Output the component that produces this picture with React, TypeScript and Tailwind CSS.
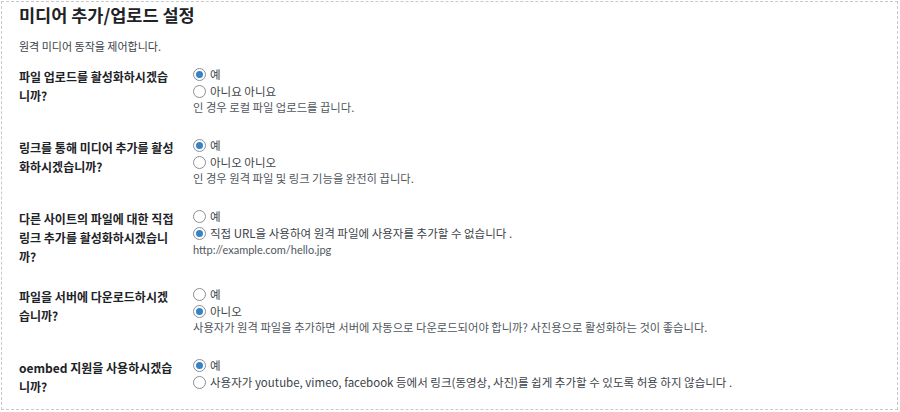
import React from "react";

function Radio({ checked }: { checked?: boolean }) {
  return (
    <span className="relative inline-flex h-[13px] w-[13px] shrink-0 items-center justify-center rounded-full border border-[#8c8f94] bg-white">
      {checked ? <span className="h-[7px] w-[7px] rounded-full bg-[#3582c4]" /> : null}
    </span>
  );
}

function Opt({ checked, children }: { checked?: boolean; children: React.ReactNode }) {
  return (
    <div className="flex h-[17px] items-center gap-[4px]">
      <Radio checked={checked} />
      <span>{children}</span>
    </div>
  );
}

function Row({ label, children }: { label: React.ReactNode; children: React.ReactNode }) {
  return (
    <div className="grid grid-cols-[174px_1fr] pb-[20px]">
      <div className="pr-[10px] pt-[1px] text-[12px] font-semibold leading-[19px] text-[#1d2327]">{label}</div>
      <div className="text-[11.5px] leading-[17px] text-[#3c434a]">{children}</div>
    </div>
  );
}

function Desc({ children }: { children: React.ReactNode }) {
  return <div className="h-[17px] text-[11.3px] leading-[15px] text-[#50575e]">{children}</div>;
}

export default function App() {
  return (
    <div
      className="h-[412px] w-[900px] bg-white p-[1px]"
      style={{ fontFamily: '"Noto Sans CJK KR", sans-serif' }}
    >
      <div className="h-[409px] w-[897px] border border-dashed border-[#c8c8c8] pl-[17px] pt-[1px]">
        <h1 className="text-[17.5px] font-semibold leading-[24px] text-[#1d2327]">미디어 추가/업로드 설정</h1>
        <p className="mt-[11px] text-[11px] leading-[16px] text-[#3c434a]">원격 미디어 동작을 제어합니다.</p>
        <div className="mt-[12px]">
          <Row label={<>파일 업로드를 활성화하시겠습<br />니까?</>}>
            <Opt checked>예</Opt>
            <Opt>아니요 아니요</Opt>
            <Desc>인 경우 로컬 파일 업로드를 끕니다.</Desc>
          </Row>
          <Row label={<>링크를 통해 미디어 추가를 활성<br />화하시겠습니까?</>}>
            <Opt checked>예</Opt>
            <Opt>아니오 아니오</Opt>
            <Desc>인 경우 원격 파일 및 링크 기능을 완전히 끕니다.</Desc>
          </Row>
          <Row label={<>다른 사이트의 파일에 대한 직접<br />링크 추가를 활성화하시겠습니<br />까?</>}>
            <Opt>예</Opt>
            <Opt checked>직접 URL을 사용하여 원격 파일에 사용자를 추가할 수 없습니다 .</Opt>
            <Desc>
              <span className="font-['Lato',sans-serif] text-[11px]">http://example.com/hello.jpg</span>
            </Desc>
          </Row>
          <Row label={<>파일을 서버에 다운로드하시겠<br />습니까?</>}>
            <Opt>예</Opt>
            <Opt checked>아니오</Opt>
            <Desc>사용자가 원격 파일을 추가하면 서버에 자동으로 다운로드되어야 합니까? 사진용으로 활성화하는 것이 좋습니다.</Desc>
          </Row>
          <Row label={<>oembed 지원을 사용하시겠습<br />니까?</>}>
            <Opt checked>예</Opt>
            <Opt>사용자가 youtube, vimeo, facebook 등에서 링크(동영상, 사진)를 쉽게 추가할 수 있도록 허용 하지 않습니다 .</Opt>
          </Row>
        </div>
      </div>
    </div>
  );
}
